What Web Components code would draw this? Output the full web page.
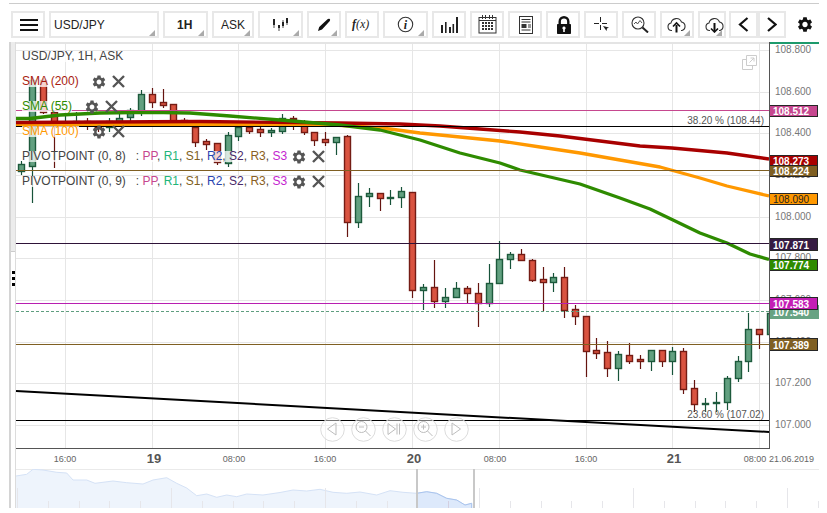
<!DOCTYPE html>
<html><head><meta charset="utf-8"><style>
html,body{margin:0;padding:0;background:#fff;overflow:hidden}
body{font-family:"Liberation Sans",Arial,sans-serif;width:827px;height:513px}
</style></head><body>
<fx-app>
  <fx-toolbar>
    <fx-btn w="34" pad="7"><svg width="18" height="12" viewBox="0 0 18 12"><path d="M0 0h18v2H0zM0 5h18v2H0zM0 10h18v2H0z" fill="#111"/></svg></fx-btn>
    <fx-btn w="110" pad="3" menu>USD/JPY</fx-btn>
    <fx-btn w="45" pad="12" menu><b>1H</b></fx-btn>
    <fx-btn w="42" pad="7" menu>ASK</fx-btn>
    <fx-btn w="45" pad="12" menu><svg width="16" height="13" viewBox="0 0 16 13"><path d="M1 1h2v6H1zM1.6 7h.8v3h-.8zM6 7h2v3H6zM6.6 10h.8v3h-.8zM10 4h2v4h-2zM10.6 2h.8v8h-.8zM14 0h2v5h-2zM14.6 5h.8v2h-.8z" fill="#222"/></svg></fx-btn>
    <fx-btn w="34" pad="9" menu><svg width="13" height="13" viewBox="0 0 13 13"><path d="M0 13l1.2-4L9.5 1.2c.8-.7 1.6-.7 2.2-.1s.6 1.4-.1 2.1L4 11.6z" fill="#111"/></svg></fx-btn>
    <fx-btn w="34" pad="5"><span style="font:italic 12px 'Liberation Serif',serif;color:#222"><b>f</b>(x)</span></fx-btn>
    <fx-btn w="45" pad="12" menu><svg width="17" height="17" viewBox="0 0 17 17"><circle cx="8.5" cy="8.5" r="7.2" fill="none" stroke="#333" stroke-width="1.1"/><text x="8.5" y="12.5" text-anchor="middle" font-family="Liberation Serif" font-style="italic" font-weight="bold" font-size="12" fill="#222">i</text></svg></fx-btn>
    <fx-btn w="34" pad="7"><svg width="17" height="16" viewBox="0 0 17 16"><path d="M0 8h2v8H0zM4 5h1.6v11H4zM8 10h2v6H8zM11.5 7h1.6v9h-1.6zM15 0h2v16h-2z" fill="#222"/></svg></fx-btn>
    <fx-btn w="34" pad="6"><svg width="19" height="19" viewBox="0 0 19 19"><rect x="1" y="2.5" width="17" height="15.5" fill="none" stroke="#333"/><path d="M1 5.5h17" stroke="#333"/><path d="M4.5 0v4M7.5 0v4M11.5 0v4M14.5 0v4" stroke="#333"/><path d="M4 8h11M4 11h11M4 14h11" stroke="#333" stroke-width="2" stroke-dasharray="2 1"/></svg></fx-btn>
    <fx-btn w="34" pad="9"><svg width="14" height="18" viewBox="0 0 14 18"><rect x=".5" y=".5" width="13" height="17" fill="none" stroke="#333"/><path d="M2.5 3.5h9M2.5 6h9M9 9h3M9 11h3M2.5 14h9" stroke="#333"/><rect x="2.5" y="8" width="5" height="4" fill="#333"/></svg></fx-btn>
    <fx-btn w="34" pad="9"><svg width="14" height="18" viewBox="0 0 14 18"><path fill-rule="evenodd" fill="#111" d="M1.5 8V5.5a5.5 5.5 0 0 1 11 0V8h.5c.6 0 1 .4 1 1v8c0 .6-.4 1-1 1H1c-.6 0-1-.4-1-1V9c0-.6.4-1 1-1zm2.4 0h6.2V5.5a3.1 3.1 0 0 0-6.2 0zM7 10.5a1.6 1.6 0 0 0-.8 3V16h1.6v-2.5a1.6 1.6 0 0 0-.8-3z"/></svg></fx-btn>
    <fx-btn w="34" pad="8"><svg width="16" height="16" viewBox="0 0 16 16"><path d="M6.500 0v5M6.500 8v5M0 6.500h5M8 6.500h5" stroke="#222" fill="none"/><path d="M9 9l6 1.500-2 1 -.5 2.500z" fill="#222"/></svg></fx-btn>
    <fx-btn w="34" pad="7"><svg width="18" height="17" viewBox="0 0 18 17"><circle cx="7" cy="7" r="6" fill="none" stroke="#333" stroke-width="1.1"/><path d="M11.500 11.500L17 16.500" stroke="#222" stroke-width="2"/><path d="M3 8l2-2 1.500 2L9 4.500 11 7" fill="none" stroke="#555"/></svg></fx-btn>
    <fx-btn w="34" pad="5" menu><svg width="19" height="16" viewBox="0 0 19 16"><path d="M5 13.500H4.500A3.800 3.800 0 0 1 4 6 5.500 5.500 0 0 1 14.500 5 4.400 4.400 0 0 1 15 13.500h-1" fill="none" stroke="#333" stroke-width="1.100"/><path d="M9.500 15.500V8" stroke="#111" stroke-width="2"/><path d="M6 9.500L9.500 6 13 9.500" fill="none" stroke="#111" stroke-width="1.600"/></svg></fx-btn>
    <fx-btn w="28" pad="5" menu><svg width="19" height="16" viewBox="0 0 19 16"><path d="M5 13.500H4.500A3.800 3.800 0 0 1 4 6 5.500 5.500 0 0 1 14.500 5 4.400 4.400 0 0 1 15 13.500h-1" fill="none" stroke="#333" stroke-width="1.100"/><path d="M9.500 6v8" stroke="#111" stroke-width="2"/><path d="M6 11.500L9.500 15 13 11.500" fill="none" stroke="#111" stroke-width="1.600"/></svg></fx-btn>
    <fx-btn w="29" pad="7" style="margin-left:-1px;margin-right:-4px"><svg width="11" height="15" viewBox="0 0 11 15"><path d="M9.500 1L2 7.500 9.500 14" fill="none" stroke="#111" stroke-width="2.200"/></svg></fx-btn>
    <fx-btn w="28" pad="7"><svg width="10" height="15" viewBox="0 0 10 15"><path d="M1 1L8.500 7.500 1 14" fill="none" stroke="#111" stroke-width="2.200"/></svg></fx-btn>
    <fx-btn w="22" pad="0" plain><svg width="19" height="19" viewBox="0 0 24 24"><path fill="#111" d="M19.140 12.940c.04-.3.06-.61.06-.94 0-.32-.02-.64-.07-.94l2.030-1.580c.18-.14.23-.41.12-.61l-1.920-3.320c-.12-.22-.37-.29-.59-.22l-2.390.96c-.5-.38-1.030-.7-1.620-.94l-.36-2.540c-.04-.24-.24-.41-.48-.41h-3.840c-.24 0-.43.17-.47.41l-.36 2.540c-.59.24-1.130.57-1.620.94l-2.390-.96c-.22-.08-.47 0-.59.22L2.740 8.870c-.12.21-.08.47.12.61l2.030 1.580c-.05.3-.09.63-.09.94s.02.64.07.94l-2.030 1.580c-.18.14-.23.41-.12.61l1.920 3.320c.12.22.37.29.59.22l2.390-.96c.5.38 1.030.7 1.620.94l.36 2.540c.05.24.24.41.48.41h3.840c.24 0 .44-.17.47-.41l.36-2.540c.59-.24 1.130-.56 1.620-.94l2.390.96c.22.08.47 0 .59-.22l1.920-3.320c.12-.22.07-.47-.12-.61l-2.010-1.580zM12 15.600c-1.980 0-3.600-1.620-3.600-3.600s1.620-3.600 3.600-3.600 3.600 1.620 3.600 3.600-1.620 3.600-3.600 3.600z"/></svg></fx-btn>
  </fx-toolbar>
  <fx-workspace>
    <fx-sidebar></fx-sidebar>
    <fx-main>
      <fx-stage>
        <fx-plot></fx-plot>
        <fx-price-axis></fx-price-axis>
        <fx-legend>
          <fx-row>USD/JPY, 1H, ASK</fx-row>
          <fx-row tools="12" color="#a81c10">SMA (200)</fx-row>
          <fx-row tools="12" color="#2e8b00">SMA (55)</fx-row>
          <fx-row tools="12" color="#ff9800">SMA (100)</fx-row>
          <fx-row tools="4" pivot>PIVOTPOINT (0, 8)</fx-row>
          <fx-row tools="4" pivot>PIVOTPOINT (0, 9)</fx-row>
        </fx-legend>
        <fx-expand></fx-expand>
        <fx-nav></fx-nav>
      </fx-stage>
      <fx-time-axis></fx-time-axis>
      <fx-overview></fx-overview>
    </fx-main>
  </fx-workspace>
</fx-app>
<script>
function def(name, css, html, init){
  customElements.define(name, class extends HTMLElement{
    connectedCallback(){
      if(this.shadowRoot) return;
      const r=this.attachShadow({mode:'open'});
      r.innerHTML='<style>'+css+'</style>'+(typeof html==='function'?html(this):html);
      if(init) init(this,r);
    }
  });
}
const GEAR='M19.14 12.94c.04-.3.06-.61.06-.94 0-.32-.02-.64-.07-.94l2.03-1.58c.18-.14.23-.41.12-.61l-1.92-3.32c-.12-.22-.37-.29-.59-.22l-2.39.96c-.5-.38-1.03-.7-1.62-.94l-.36-2.54c-.04-.24-.24-.41-.48-.41h-3.84c-.24 0-.43.17-.47.41l-.36 2.54c-.59.24-1.13.57-1.62.94l-2.39-.96c-.22-.08-.47 0-.59.22L2.74 8.87c-.12.21-.08.47.12.61l2.03 1.58c-.05.3-.09.63-.09.94s.02.64.07.94l-2.03 1.58c-.18.14-.23.41-.12.61l1.92 3.32c.12.22.37.29.59.22l2.39-.96c.5.38 1.03.7 1.62.94l.36 2.54c.05.24.24.41.48.41h3.84c.24 0 .44-.17.47-.41l.36-2.54c.59-.24 1.13-.56 1.62-.94l2.39.96c.22.08.47 0 .59-.22l1.92-3.32c.12-.22.07-.47-.12-.61l-2.01-1.58zM12 15.6c-1.98 0-3.6-1.62-3.6-3.6s1.62-3.6 3.6-3.6 3.6 1.62 3.6 3.6-1.62 3.6-3.6 3.6z';

def('fx-app',':host{display:flex;flex-direction:column;margin:3px 8px 0 9px;border-top:1px solid #ccc}','<slot></slot>');
def('fx-toolbar',':host{display:flex;gap:4px;padding:7px 0 4px 2px;height:27px;box-sizing:content-box;align-items:flex-start}','<slot></slot>');
def('fx-btn',`:host{display:flex;align-items:center;box-sizing:border-box;height:27px;border:2px solid #e8e8e8;position:relative;font:12px "Liberation Sans",sans-serif;color:#222;flex:none}
:host([plain]){border-color:transparent;margin-left:4px}
:host([menu])::after{content:"";position:absolute;right:2px;bottom:0;width:6px;height:6px;background:#aaa;clip-path:polygon(100% 0,100% 100%,0 100%)}`,'<slot></slot>',h=>{
  h.style.width=h.getAttribute('w')+'px'; h.style.paddingLeft=h.getAttribute('pad')+'px';
});
def('fx-workspace',':host{display:flex;align-items:stretch}','<slot></slot>');
def('fx-sidebar',`:host{display:flex;flex-direction:column;box-sizing:border-box;width:7px;height:466px;border-left:2px solid #d4d4d4;border-right:1px solid #dcdcdc;flex:none}
.thumb{height:209px;background:#ececec;border-bottom:1px solid #ccc;flex:none}
.dots{display:flex;flex-direction:column;gap:3px;margin:19px 0 0 1px}
i{display:block;width:3px;height:3px;background:#000}`,'<div class="thumb"></div><div class="dots"><i></i><i></i><i></i></div>');
def('fx-main',':host{display:flex;flex-direction:column;width:803px}','<slot></slot>');
def('fx-stage',':host{display:flex;position:relative;height:407px}','<slot></slot>');

const GRIDX=[65,152,238,325,412,499,586,672,759], GRIDY=[50,92,133,175,217,258,300,342,383,425];
const C=[[21,'g',164,172,161,175],[32,'g',80,167,78,203],[43,'r',80,113,78,114],[54,'r',112,123,110,168],[65,'g',122,125,113,128],[76,'g',121,125,112,128],[87,'r',121,124,118,130],[98,'r',125,128,122,132],[109,'g',121,128,118,132],[119,'g',118,123,114,125],[130,'g',110,118,108,122],[141,'g',94,113,90,116],[152,'r',94,103,88,108],[163,'r',102,106,89,108],[173,'r',104,122,104,124],[184,'r',120,124,118,124],[195,'r',127,143,126,147],[206,'r',141,145,139,150],[217,'r',143,163,143,165],[228,'g',135,164,132,167],[238,'g',127,137,125,141],[249,'r',127,132,125,134],[260,'r',129,133,127,137],[271,'g',130,133,128,137],[282,'g',118,132,114,134],[293,'r',118,120,116,130],[304,'r',122,133,120,135],[314,'r',132,141,132,146],[325,'r',139,143,132,146],[336,'g',137,143,137,155],[347,'r',136,223,135,237],[358,'g',196,223,183,228],[369,'g',193,197,188,207],[380,'r',193,199,193,211],[390,'g',197,199,190,205],[401,'g',191,198,187,208],[412,'r',192,291,192,298],[423,'g',287,291,284,310],[434,'r',287,302,260,308],[445,'g',297,302,288,308],[456,'g',288,298,282,298],[467,'r',288,294,286,303],[478,'r',293,304,283,327],[489,'g',283,304,264,307],[499,'g',259,284,241,284],[510,'g',254,260,252,269],[521,'r',254,261,249,261],[532,'r',260,281,259,282],[543,'r',279,283,267,311],[553,'g',277,283,273,292],[564,'r',277,311,267,318],[575,'r',309,317,305,325],[586,'r',316,352,316,377],[596,'r',350,354,338,359],[607,'r',352,369,341,377],[618,'g',354,369,351,381],[629,'r',355,362,343,364],[640,'r',359,362,355,369],[651,'g',350,362,350,371],[662,'r',350,362,350,367],[672,'g',351,362,347,375],[683,'r',351,390,348,394],[694,'r',388,405,380,412],[705,'g',403,405,398,412],[716,'g',402,404,392,412],[727,'g',378,403,376,410],[738,'g',361,379,356,382],[748,'g',329,362,313,372],[759,'r',329,335,329,349],[770,'g',313,335,313,335]];

function line(x1,y1,x2,y2,c,extra){return `<line x1="${x1}" y1="${y1}" x2="${x2}" y2="${y2}" stroke="${c}" ${extra||''}/>`;}
function plot(){
  let s=`<svg width="753" height="407" viewBox="16 42 753 407" style="display:block">`;
  s+='<g shape-rendering="crispEdges">';
  GRIDX.forEach(x=>s+=line(x+.5,44,x+.5,449,'#e6e6e6'));
  GRIDY.forEach(y=>s+=line(16,y+.5,769,y+.5,'#e6e6e6'));
  s+=`<rect x="16" y="42" width="753" height="2" fill="#e4e4e4"/>`;
  s+='</g>';
  C.forEach(([x,t,a,b,h,l])=>{
    const st=t==='r'?'#741c14':'#1d5a3c', f=t==='r'?'#d95340':'#62a080', w=t==='r'?'#651410':'#17533a';
    s+=line(x+.5,h,x+.5,l,w,'stroke-width="1.200"');
    s+=`<rect x="${x-2.5}" y="${a+.5}" width="6" height="${Math.max(b-a-1,1)}" fill="${f}" stroke="${st}" stroke-width="1.400"/>`;
  });
  const P=(pts,c,w)=>`<polyline points="${pts}" fill="none" stroke="${c}" stroke-width="${w}" stroke-linejoin="round"/>`;
  s+=P('16,124.500 330,124.800 360,126.500 390,129 420,133 460,137 500,141 540,147 580,153 620,160 660,167 700,178 727,186 769,196','#ff9800',3.3);
  s+=P('16,122.500 200,121.500 340,123 400,124 440,126 480,129 520,132 560,136 600,141 640,146 672,148 727,153 769,159','#a80000',3.3);
  s+=P('16,118.500 30,118.500 60,115 100,113 150,112.300 190,113 230,116 280,120 340,125 380,130 420,140 460,153 500,163 520,170 580,184 620,198 650,209 673,220 700,233 727,243 750,254 769,259.500','#2e8b00',3.3);
  s+='<g shape-rendering="crispEdges">';
  s+=line(16,110.5,769,110.5,'#c6478f')+line(16,126.5,769,126.5,'#000')+line(16,170.5,769,170.5,'#7f5f22')+line(16,243.5,769,243.5,'#2e1338')+line(16,303.5,769,303.5,'#b81fb0')+line(16,311.5,769,311.5,'#5f9e7f','stroke-dasharray="3 2"')+line(16,344.5,769,344.5,'#7f5f22')+line(16,420.5,769,420.5,'#000');
  s+=line(16,449,769,449,'#555','stroke-width="2"');
  s+='</g>';
  s+=line(16,391,769,432,'#000','stroke-width="2"');
  s+=`<g font-family="Liberation Sans" font-size="10" fill="#555" text-anchor="end"><text x="764" y="123.500">38.20 % (108.44)</text><text x="764" y="417.500">23.60 % (107.02)</text></g>`;
  return s+'</svg>';
}
def('fx-plot',':host{display:block;width:753px;height:407px;flex:none}',plot);

function axis(){
  let s=`<svg width="50" height="407" viewBox="769 42 50 407" style="display:block" font-family="Liberation Sans" font-size="10">`;
  const L=[[53,'108.800'],[95,'108.600'],[136,'108.400'],[178,'108.200'],[220,'108.000'],[261,'107.800'],[303,'107.600'],[345,'107.400'],[386,'107.200'],[428,'107.000']];
  L.forEach(([y,t])=>s+=`<text x="775" y="${y}" fill="#777">${t}</text>`);
  s+=`<rect x="769" y="305" width="50" height="14" fill="#67a383"/><text x="773" y="316" fill="#fff" font-weight="bold">107.540</text>`;
  const B=[[105,11,'#c6478f','108.512','#fff'],[155,10,'#a80000','108.273','#fff'],[165,11,'#7f5f22','108.224','#fff'],[193,11,'#ff9800','108.090','#222'],[238,12,'#351a42','107.871','#fff'],[259,11,'#2e8b00','107.774','#fff'],[297,12,'#c41fb5','107.583','#fff'],[338,12,'#7f5f22','107.389','#fff']];
  B.forEach(([y,h,c,t,f])=>{
    s+=`<rect x="769.500" y="${y+.5}" width="48" height="${h}" fill="${c}" stroke="#262626" shape-rendering="crispEdges"/><text x="773" y="${y+h/2+4.5}" fill="${f}" font-weight="${f==='#fff'?'bold':'normal'}">${t}</text>`;
  });
  s+=`<rect x="769" y="42" width="50" height="2" fill="#1d9a6c"/>`;
  s+=`<path d="M769.500 42V449" stroke="#555" shape-rendering="crispEdges"/>`;
  return s+'</svg>';
}
def('fx-price-axis',':host{display:block;width:50px;height:407px;flex:none}',axis);

def('fx-legend',':host{position:absolute;left:6px;top:2px;display:flex;flex-direction:column;font:12px "Liberation Sans",sans-serif;color:#444;pointer-events:none}','<slot></slot>');
const XI='<svg width="13" height="13" viewBox="0 0 13 13" style="margin-left:5px;flex:none"><path d="M1 1l11 11M12 1L1 12" stroke="#555" stroke-width="2.400"/></svg>';
const GI=`<svg width="16" height="16" viewBox="0 0 24 24" style="flex:none"><path fill="#555" d="${GEAR}"/></svg>`;
def('fx-row',`:host{display:flex;align-items:center;height:25px;white-space:nowrap}
.t{background:rgba(255,255,255,.75);line-height:11px;display:inline-block}
.p{margin-left:10px}
.tools{display:flex;align-items:center}`,h=>{
  const col=h.getAttribute('color'), tools=h.getAttribute('tools');
  const c=(t,cl)=>`<span style="color:${cl}">${t}</span>`;
  let o=`<span class="t" ${col?`style="color:${col}"`:''}><slot></slot></span>`;
  if(h.hasAttribute('pivot')) o+=`<span class="t p">: ${c('PP','#c6478f')}, ${c('R1','#1fb57a')}, ${c('S1','#7f5f22')}, ${c('R2','#2a45b0')}, ${c('S2','#4a2a6a')}, ${c('R3','#8a5f22')}, ${c('S3','#c41fd0')}</span>`;
  if(tools) o+=`<span class="tools" style="margin-left:${tools}px">${GI}${XI}</span>`;
  return o;
});
def('fx-expand',':host{position:absolute;right:62px;top:13px;display:block;width:15px;height:15px}',`<svg width="15" height="15" viewBox="0 0 15 15" style="display:block"><path d="M4.500 .5h10v10h-10zM.5 4.500h4M.5 4.500v10h10v-4" fill="none" stroke="#ccc"/><path d="M7.500 7.500L12 3M8.500 3H12v3.500" fill="none" stroke="#ccc"/></svg>`);
const NI=[
 '<path d="M16 6L7.500 12 16 18z"/>',
 '<circle cx="10.500" cy="10" r="5.500"/><path d="M14.500 14l5 5M8 10h5"/>',
 '<path d="M6 6.500l7.500 5.500L6 17.500zM15 6.500v11M17.500 6.500v11"/>',
 '<circle cx="10.500" cy="10" r="5.500"/><path d="M14.500 14l5 5M8 10h5M10.500 7.500v5"/>',
 '<path d="M8 6l8.500 6L8 18z"/>'];
def('fx-nav',`:host{position:absolute;left:304px;top:375px;display:flex;gap:7px}
svg{display:block;width:25px;height:25px;margin-right:-1px}`,NI.map(p=>`<svg viewBox="0 0 25 25" fill="none"><circle cx="12.500" cy="12.500" r="11.800" fill="rgba(255,255,255,.45)" stroke="#dcdcdc"/><g stroke="#bdbdbd">${p}</g></svg>`).join(''));

function timeaxis(){
  let s=`<svg width="803" height="20" viewBox="16 449 803 20" style="display:block" font-family="Liberation Sans" font-size="9" fill="#666" text-anchor="middle">`;
  [[65,'16:00'],[234,'08:00'],[325,'16:00'],[495,'08:00'],[586,'16:00'],[755,'08:00']].forEach(([x,t])=>s+=`<text x="${x}" y="462">${t}</text>`);
  [[154,'19'],[414,'20'],[674,'21']].forEach(([x,t])=>s+=`<text x="${x}" y="463" font-size="13" font-weight="bold" fill="#555">${t}</text>`);
  s+=`<text x="791.500" y="462">21.06.2019</text>`;
  return s+'</svg>';
}
def('fx-time-axis',':host{display:block;height:20px;flex:none}',timeaxis);

function overview(){
  const pts='16,476 26.700,474.300 33,469.300 43,470 56.700,472.300 66.700,473 73,480 86.700,480 95,483.300 113,481 126.700,482.700 143,484 153,480 166.700,477.700 176.700,483.300 186.700,488 196.700,495.700 206.700,494 216.700,497.300 226.700,495 236.700,496.700 246.700,494 263,495 280,492.500 293,490 306.700,491 320,489.300 333,492.300 346.700,493.300 360,492 376.700,495 390,490.700 403,492.300 416.700,493.300 426.700,491.700 436.700,493.300 446.700,498.300 456.700,500 465,505 471.700,503.300';
  let s=`<svg width="803" height="39" viewBox="16 469 803 39" style="display:block">`;
  s+=`<rect x="16" y="469" width="803" height="1" fill="#eaeaea"/>`;
  s+=`<clipPath id="w"><rect x="417" y="469" width="56" height="39"/></clipPath>`;
  s+=`<polygon points="16,508 ${pts} 471.700,508" fill="#eef4fc"/>`;
  s+=`<polygon clip-path="url(#w)" points="16,508 ${pts} 471.700,508" fill="#dde9fb"/>`;
  s+=`<polyline points="${pts} 471.700,508" fill="none" stroke="#d5e2f6"/>`;
  s+=`<polyline clip-path="url(#w)" points="${pts} 471.700,508" fill="none" stroke="#a9c4ee"/>`;
  for(let k=0;k<27;k++){const x=Math.round(17+30.8*k),tall=k%5===0;
    s+=`<rect x="${x}" y="${tall?488:501}" width="1" height="${tall?20:7}" fill="${x>417&&x<472?'#d3cfe0':'#e6e6ea'}"/>`;}
  s+=`<rect x="416" y="469" width="2" height="39" fill="#c8c8c8"/><rect x="473" y="469" width="2" height="39" fill="#c8c8c8"/>`;
  return s+'</svg>';
}
def('fx-overview',':host{display:block;height:39px;flex:none}',overview);
</script>
</body></html>
